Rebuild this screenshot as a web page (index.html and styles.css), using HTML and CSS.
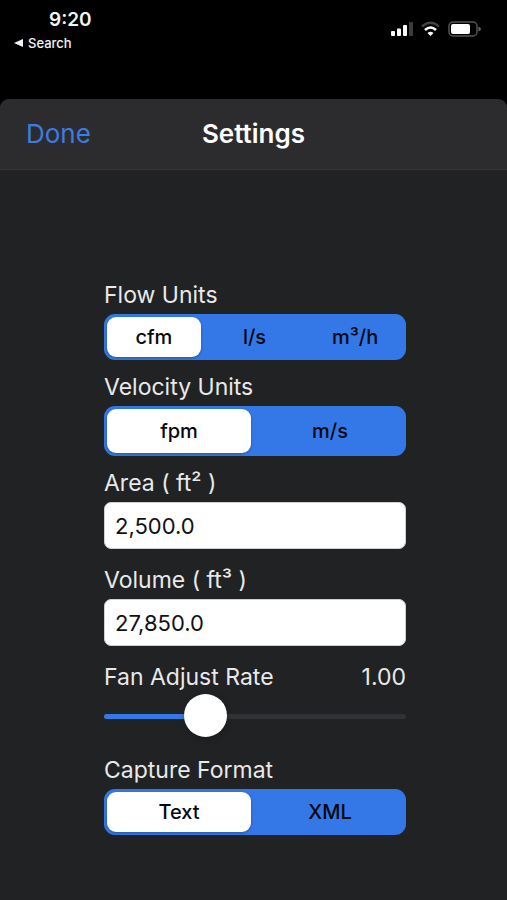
FILE: index.html
```html
<!DOCTYPE html>
<html lang="en">
<head>
<meta charset="utf-8">
<meta name="viewport" content="width=device-width, initial-scale=1">
<title>Settings</title>
<link rel="stylesheet" href="styles.css">
</head>
<body>
<div class="status">
  <div class="status-left">
    <time class="clock">9:20</time>
    <a class="back" href="#">
      <svg width="9" height="8" viewBox="0 0 9 8" aria-hidden="true"><path d="M9 0v8L0 4z" fill="currentColor"/></svg>
      <span>Search</span>
    </a>
  </div>
  <div class="status-icons">
    <svg width="23" height="16" viewBox="0 0 23 16" aria-hidden="true">
      <rect x="1" y="10" width="4" height="5" rx="1" fill="#fff"/>
      <rect x="7" y="7.500" width="4" height="7.500" rx="1" fill="#fff"/>
      <rect x="13" y="4" width="4" height="11" rx="1" fill="#fff"/>
      <rect x="19" y="1" width="4" height="14" rx="1" fill="#3c3c3c"/>
    </svg>
    <svg width="19" height="16" viewBox="0 0 19 16" aria-hidden="true">
      <path d="M1 5.500Q9.500-2 18 5.500" fill="none" stroke="#444" stroke-width="2.200"/>
      <path d="M4 9Q9.500 4 15 9" fill="none" stroke="#fff" stroke-width="2.600"/>
      <path d="M6.500 12Q9.500 9.300 12.500 12L9.500 15z" fill="#fff"/>
    </svg>
    <svg width="33" height="16" viewBox="0 0 33 16" aria-hidden="true">
      <rect x="1" y="1" width="28" height="14" rx="4" fill="none" stroke="#555" stroke-width="1.500"/>
      <rect x="3" y="3" width="19" height="10" rx="2" fill="#fff"/>
      <path d="M30.500 5.500Q33 6.500 33 8T30.500 10.500z" fill="#666"/>
    </svg>
  </div>
</div>
<main class="sheet">
  <header class="bar">
    <button class="done" type="button">Done</button>
    <h1 class="title">Settings</h1>
  </header>
  <form class="form">
    <fieldset class="field">
      <legend class="label">Flow Units</legend>
      <div class="segments">
        <label class="segment"><input type="radio" name="flow" checked><span>cfm</span></label>
        <label class="segment"><input type="radio" name="flow"><span>l/s</span></label>
        <label class="segment"><input type="radio" name="flow"><span>m³/h</span></label>
      </div>
    </fieldset>
    <fieldset class="field">
      <legend class="label">Velocity Units</legend>
      <div class="segments segments-tall">
        <label class="segment"><input type="radio" name="velocity" checked><span>fpm</span></label>
        <label class="segment"><input type="radio" name="velocity"><span>m/s</span></label>
      </div>
    </fieldset>
    <div class="field field-text">
      <label class="label" for="area">Area ( ft² )</label>
      <input class="text-input" id="area" type="text" inputmode="decimal" value="2,500.0">
    </div>
    <div class="field field-text">
      <label class="label" for="volume">Volume ( ft³ )</label>
      <input class="text-input" id="volume" type="text" inputmode="decimal" value="27,850.0">
    </div>
    <div class="field field-slider">
      <div class="label-row">
        <label class="label" for="rate">Fan Adjust Rate</label>
        <output class="label" for="rate">1.00</output>
      </div>
      <input class="slider" id="rate" type="range" min="0.1" max="3" step="0.01" value="1">
    </div>
    <fieldset class="field">
      <legend class="label">Capture Format</legend>
      <div class="segments">
        <label class="segment"><input type="radio" name="format" checked><span>Text</span></label>
        <label class="segment"><input type="radio" name="format"><span>XML</span></label>
      </div>
    </fieldset>
  </form>
</main>
</body>
</html>
```
FILE: styles.css
```css
* {
  box-sizing: border-box;
}

body {
  margin: 0;
  min-height: 100vh;
  display: flex;
  flex-direction: column;
  background: #000;
  color: #e9e9ea;
  font-family: Inter, "Liberation Sans", sans-serif;
}

.status {
  display: flex;
  justify-content: space-between;
  height: 99px;
  padding: 8px 26px 0 14px;
  color: #f4f4f4;
}

.status-left {
  display: flex;
  flex-direction: column;
}

.clock {
  padding-left: 35px;
  font-size: 19px;
  font-weight: 600;
  line-height: 24px;
}

.back {
  display: flex;
  align-items: center;
  gap: 5px;
  color: inherit;
  font-size: 13px;
  font-weight: 500;
  line-height: 22px;
  text-decoration: none;
}

.status-icons {
  display: flex;
  gap: 8px;
  padding-top: 13px;
}

.sheet {
  flex: 1;
  overflow: hidden;
  background: #202224;
  border-radius: 9px 9px 0 0;
}

.bar {
  display: grid;
  grid-template-columns: 1fr auto 1fr;
  align-items: center;
  height: 71px;
  padding: 0 26px;
  background: #2c2c2e;
  border-bottom: 1px solid #333436;
}

.done {
  justify-self: start;
  padding: 0;
  border: 0;
  background: none;
  color: #3b7de0;
  font: inherit;
  font-size: 26px;
  line-height: 32px;
}

.title {
  margin: 0;
  color: #fff;
  font-size: 26px;
  font-weight: 600;
  line-height: 32px;
}

.form {
  padding: 111px 101px 0 104px;
}

.field {
  min-width: 0;
  margin: 0 0 13px;
  padding: 0;
  border: 0;
}

.field-text {
  margin-bottom: 17px;
}

.field-slider {
  margin-bottom: 20px;
}

.label {
  display: block;
  margin-bottom: 5px;
  padding: 0;
  font-size: 23px;
  line-height: 28px;
}

.label-row {
  display: flex;
  justify-content: space-between;
}

.segments {
  display: grid;
  grid-auto-flow: column;
  grid-auto-columns: 1fr;
  height: 46px;
  background: #3478e8;
  border-radius: 11px;
}

.segments-tall {
  height: 50px;
}

.segment {
  display: flex;
  padding: 3px 4px 3px 3px;
  color: #06080f;
  font-size: 20px;
  font-weight: 500;
}

.segment input {
  position: absolute;
  appearance: none;
  margin: 0;
}

.segment span {
  flex: 1;
  display: flex;
  align-items: center;
  justify-content: center;
  border-radius: 9px;
}

.segment input:checked + span {
  background: #fff;
  box-shadow: 0 1px 3px rgba(0, 0, 0, 0.3);
}

.text-input {
  display: block;
  width: 100%;
  height: 47px;
  padding: 0 10px;
  border: 1px solid #d0d0d0;
  border-radius: 7px;
  background: #fff;
  color: #111;
  font: inherit;
  font-size: 22px;
}

.slider {
  display: block;
  width: 100%;
  height: 40px;
  margin: 0;
  appearance: none;
  background: none;
}

.slider::-webkit-slider-runnable-track {
  height: 5px;
  border-radius: 3px;
  background: linear-gradient(to right, #3478e8 34%, #313235 34%);
}

.slider::-webkit-slider-thumb {
  appearance: none;
  width: 43px;
  height: 43px;
  margin-top: -20px;
  border-radius: 50%;
  background: #fff;
  box-shadow: 0 2px 6px rgba(0, 0, 0, 0.25);
}
```
